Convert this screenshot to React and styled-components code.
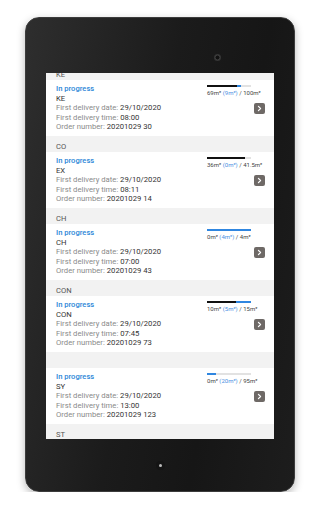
import React from "react"
import styled, { createGlobalStyle } from "styled-components"

const Global = createGlobalStyle`
  html, body {
    margin: 0;
    padding: 0;
    background: #fff;
    font-family: Roboto, "Liberation Sans", sans-serif;
  }
`

const Device = styled.div`
  box-sizing: border-box;
  width: 270px;
  height: 475px;
  margin: 17px auto 0;
  display: flex;
  flex-direction: column;
  border: 1px solid #3c3c3c;
  border-radius: 14px;
  background: linear-gradient(100deg, #2e2e2e 0%, #1b1b1b 45%, #161616 70%, #1d1d1d 100%);
  box-shadow: 0 3px 8px rgba(0, 0, 0, 0.28);
`

const TopBezel = styled.div`
  height: 55px;
  display: flex;
  justify-content: flex-end;
  align-items: flex-end;
  padding: 0 73px 12px 0;
  box-sizing: border-box;
`

const Camera = styled.div`
  width: 7px;
  height: 7px;
  border-radius: 50%;
  background: radial-gradient(circle, #111 35%, #3a3a3a 45%, #2a2a2a 100%);
`

const Screen = styled.div`
  height: 366px;
  margin: 0 20px;
  background: #f2f2f2;
  overflow: hidden;
`

const List = styled.div`
  margin-top: -9px;
`

const Header = styled.div`
  height: 16px;
  box-sizing: border-box;
  padding: 4px 0 0 10px;
  display: flex;
  align-items: center;
  font-size: 7.6px;
  color: #555;
  background: #f2f2f2;
`

const Card = styled.div`
  height: 56px;
  box-sizing: border-box;
  padding: 4px 9px 0 10px;
  background: #fff;
  display: grid;
  grid-template-columns: 1fr 58px;
`

const Info = styled.div`
  display: flex;
  flex-direction: column;
`

const Line = styled.div`
  height: 9.5px;
  line-height: 9.5px;
  font-size: ${(p) => (p.$title ? "7.6px" : "7.7px")};
  font-weight: ${(p) => (p.$title ? 500 : 400)};
  color: ${(p) => (p.$title ? "#2a86d8" : "#333")};
  white-space: nowrap;
`

const Label = styled.span`
  color: #8a8a8a;
`

const Side = styled.div`
  grid-column: 2;
  grid-row: 1;
  display: grid;
  margin-top: -4px;
  height: 56px;
`

const Meter = styled.div`
  grid-area: 1 / 1;
  align-self: start;
  padding-top: 5px;
`

const Track = styled.div`
  width: 44px;
  height: 2px;
  display: flex;
  background: #e2e2e2;
`

const Fill = styled.div`
  height: 100%;
  background: ${(p) => p.$color};
`

const MeterText = styled.div`
  margin-top: 1.5px;
  font-size: 6px;
  color: #444;
  white-space: nowrap;
`

const Planned = styled.span`
  color: #4a90e2;
`

const Arrow = styled.button`
  grid-area: 1 / 1;
  align-self: center;
  justify-self: end;
  width: 11px;
  height: 11px;
  padding: 0;
  border: none;
  border-radius: 2px;
  background: #6e6966;
  display: flex;
  align-items: center;
  justify-content: center;
`

const BottomBezel = styled.div`
  flex: 1;
  display: flex;
  align-items: center;
  justify-content: center;
`

const HomeDot = styled.div`
  width: 3px;
  height: 3px;
  border-radius: 50%;
  background: #bbb;
  box-shadow: 0 0 0 3px #141414;
`

const orders = [
  { group: "KE", name: "KE", time: "08:00", num: "20201029 30", done: 69, plan: 9, total: 100, label: "100m²" },
  { group: "CO", name: "EX", time: "08:11", num: "20201029 14", done: 36, plan: 0, total: 41.5, label: "41.5m²" },
  { group: "CH", name: "CH", time: "07:00", num: "20201029 43", done: 0, plan: 4, total: 4, label: "4m²" },
  { group: "CON", name: "CON", time: "07:45", num: "20201029 73", done: 10, plan: 5, total: 15, label: "15m²" },
  { group: "", name: "SY", time: "13:00", num: "20201029 123", done: 0, plan: 20, total: 95, label: "95m²" },
]

function Order({ o }) {
  const black = (o.done / o.total) * 100
  const blue = (o.plan / o.total) * 100
  return (
    <Card>
      <Info>
        <Line $title>In progress</Line>
        <Line>{o.name}</Line>
        <Line>
          <Label>First delivery date: </Label>29/10/2020
        </Line>
        <Line>
          <Label>First delivery time: </Label>
          {o.time}
        </Line>
        <Line>
          <Label>Order number: </Label>
          {o.num}
        </Line>
      </Info>
      <Side>
        <Meter>
          <Track>
            <Fill $color="#111" style={{ width: `${black}%` }} />
            <Fill $color="#2f86e0" style={{ width: `${blue}%` }} />
          </Track>
          <MeterText>
            {o.done}m² <Planned>({o.plan}m²)</Planned> / {o.label}
          </MeterText>
        </Meter>
        <Arrow>
          <svg width="7" height="7" viewBox="0 0 10 10">
            <path d="M3.5 2 L6.5 5 L3.5 8" fill="none" stroke="#fff" strokeWidth="1.8" strokeLinecap="round" strokeLinejoin="round" />
          </svg>
        </Arrow>
      </Side>
    </Card>
  )
}

export default function App() {
  return (
    <>
      <Global />
      <Device>
        <TopBezel>
          <Camera />
        </TopBezel>
        <Screen>
          <List>
            {orders.map((o, i) => (
              <React.Fragment key={i}>
                <Header>{o.group}</Header>
                <Order o={o} />
              </React.Fragment>
            ))}
            <Header>ST</Header>
          </List>
        </Screen>
        <BottomBezel>
          <HomeDot />
        </BottomBezel>
      </Device>
    </>
  )
}
